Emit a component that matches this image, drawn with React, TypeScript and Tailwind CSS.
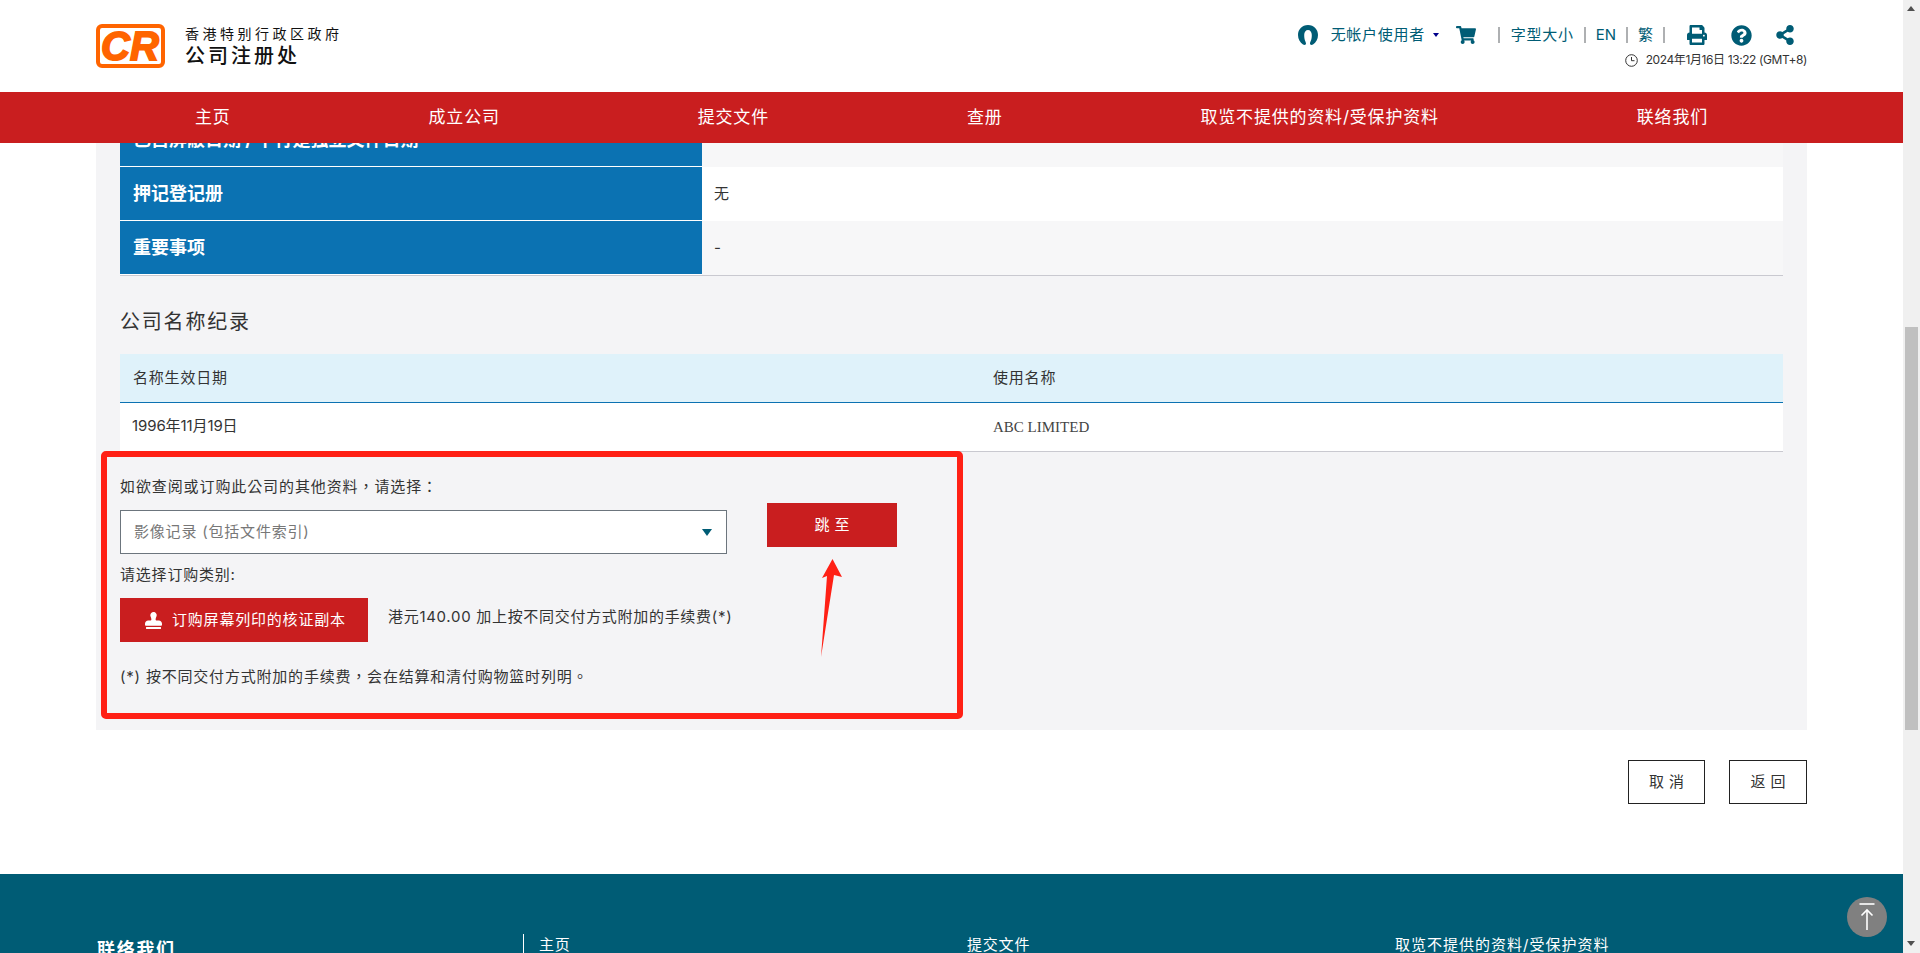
import React from "react";
import { FaShoppingCart, FaPrint, FaQuestionCircle, FaShareAlt, FaStamp } from "react-icons/fa";

const navItems = ["主页", "成立公司", "提交文件", "查册", "取览不提供的资料/受保护资料", "联络我们"];

function Logo() {
  return (
    <svg width="69" height="44" viewBox="0 0 69 44" className="shrink-0">
      <rect x="2" y="2" width="65" height="40" rx="4" fill="#fff" stroke="#ff6400" strokeWidth="4" />
      <text
        x="34"
        y="36"
        textAnchor="middle"
        fontFamily="'Liberation Sans', sans-serif"
        fontWeight="700"
        fontStyle="italic"
        fontSize="40"
        fill="#ff6400"
        stroke="#ff6400"
        strokeWidth="1.8"
      >
        CR
      </text>
    </svg>
  );
}

function UserIcon() {
  return (
    <svg width="20" height="20" viewBox="0 0 20 20" className="shrink-0">
      <path
        fill="#005c75"
        d="M10 0C4 0 0 4.500 0 10C0 14 2 17.500 5 19.500C6.500 20.300 8 20 8 18.500C8 17 6.200 15.500 6.200 10C6.200 7 7.800 5 10 5C12.200 5 13.800 7 13.800 10C13.800 15.500 12 17 12 18.500C12 20 13.500 20.300 15 19.500C18 17.500 20 14 20 10C20 4.500 16 0 10 0Z"
      />
    </svg>
  );
}

function Sep({ className }: { className: string }) {
  return <span className={`block w-[2px] h-[16px] bg-[#aeb0b2] shrink-0 ${className}`} />;
}

function Header() {
  return (
    <header className="h-[92px] px-[96px] flex justify-between bg-white shrink-0">
      <div className="flex items-start pt-[24px] gap-[20px]">
        <Logo />
        <div className="flex flex-col text-[#111]">
          <span className="text-[14px] leading-[17px] tracking-[3.5px] mt-[1px] whitespace-nowrap">香港特别行政区政府</span>
          <span className="text-[20px] leading-[24px] tracking-[3px] font-medium mt-[2px] whitespace-nowrap">公司注册处</span>
        </div>
      </div>
      <div className="flex flex-col items-end pt-[25px]">
        <div className="flex items-center h-[20px] mr-[12px] text-[#005c75] text-[15px] whitespace-nowrap">
          <UserIcon />
          <span className="ml-[13px] tracking-[0.7px]">无帐户使用者</span>
          <span className="ml-[8px] w-0 h-0 border-x-[3px] border-x-transparent border-t-[4px] border-t-[#00008b]" />
          <FaShoppingCart className="ml-[17px] text-[20px] text-[#005c75]" />
          <Sep className="ml-[22px]" />
          <span className="ml-[11px] tracking-[0.7px]">字型大小</span>
          <Sep className="ml-[10px]" />
          <span className="ml-[10px]">EN</span>
          <Sep className="ml-[10px]" />
          <span className="ml-[10px]">繁</span>
          <Sep className="ml-[10px]" />
          <FaPrint className="ml-[22px] text-[20px]" />
          <FaQuestionCircle className="ml-[24px] text-[21px]" />
          <FaShareAlt className="ml-[23px] text-[20px]" />
        </div>
        <div className="flex items-center mt-[5px] h-[20px] text-[12px] tracking-[-0.4px] text-[#333] whitespace-nowrap">
          <svg width="13" height="13" viewBox="0 0 13 13" className="mr-[8px]" fill="none" stroke="#333" strokeWidth="1">
            <circle cx="6.500" cy="6.500" r="5.800" />
            <path d="M6.500 3v3.700h3" />
          </svg>
          <span>2024年1月16日 13:22 (GMT+8)</span>
        </div>
      </div>
    </header>
  );
}

function Nav() {
  return (
    <nav className="h-[51px] bg-[#c91e1f] px-[96px] flex justify-around items-center text-white text-[17px] tracking-[0.8px] shrink-0 relative z-10">
      {navItems.map((n) => (
        <span key={n} className="whitespace-nowrap">{n}</span>
      ))}
    </nav>
  );
}

function InfoRow({ label, value, alt, first }: { label: string; value?: string; alt?: boolean; first?: boolean }) {
  return (
    <div className={`flex h-[54px] ${first ? "mt-[-30px]" : ""}`}>
      <div className="w-[582px] bg-[#0b72b2] border-b border-white flex items-center pl-[13px] text-white text-[18px] font-bold whitespace-nowrap">
        {label}
      </div>
      <div className={`flex-1 flex items-center pl-[12px] text-[15px] text-[#333] ${alt ? "bg-[#f7f7f8]" : "bg-white"}`}>
        {value}
      </div>
    </div>
  );
}

function Panel() {
  return (
    <section className="mx-[96px] h-[587px] bg-[#f4f4f6] shrink-0">
      <div className="mx-[24px]">
        <InfoRow first alt label="已自屏蔽日期 / 下行是独立文件日期" />
        <InfoRow label="押记登记册" value="无" />
        <div className="border-b border-[#c9c9d0]">
          <InfoRow alt label="重要事项" value="-" />
        </div>
        <h2 className="mt-[31px] h-[30px] flex items-center text-[20px] tracking-[1.800px] text-[#333]">公司名称纪录</h2>
        <div className="mt-[17px] flex h-[49px] bg-[#dff2fa] border-b border-[#0b72b2] items-center text-[15px] tracking-[0.8px] text-[#333]">
          <span className="w-[873px] pl-[13px]">名称生效日期</span>
          <span>使用名称</span>
        </div>
        <div className="flex h-[49px] bg-white border-b border-[#c9c9d0] items-center text-[15px] text-[#333]">
          <span className="w-[873px] pl-[12px] pb-[2px] tracking-[-0.1px]">1996年11月19日</span>
          <span className="font-['Liberation_Serif',serif] text-[15px] text-[#444]">ABC LIMITED</span>
        </div>
      </div>
      <div className="relative ml-[5px] mt-[-1px] w-[862px] h-[268px] border-[6px] border-[#ff2015] rounded-[5px] pl-[13px] pt-[18px] flex text-[15px] tracking-[0.8px] text-[#333]">
        <div className="w-[607px] shrink-0">
          <div className="h-[24px] flex items-center whitespace-nowrap tracking-[0.9px] font-['Inter','Noto_Sans_CJK_TC',sans-serif]">如欲查阅或订购此公司的其他资料，请选择：</div>
          <div className="mt-[11px] h-[44px] bg-white border border-[#6c757d] flex items-center justify-between pl-[13px] pr-[14px] text-[#777]">
            <span>影像记录 (包括文件索引)</span>
            <span className="w-0 h-0 border-x-[5px] border-x-transparent border-t-[7px] border-t-[#005c75]" />
          </div>
          <div className="mt-[9px] h-[24px] flex items-center">请选择订购类别:</div>
          <div className="mt-[11px] flex items-start whitespace-nowrap">
            <button className="w-[248px] h-[44px] bg-[#c91e1f] text-white flex items-center pl-[25px] gap-[10px] shrink-0">
              <FaStamp className="text-[17px] shrink-0" />
              <span>订购屏幕列印的核证副本</span>
            </button>
            <span className="ml-[20px] mt-[7px] h-[24px] flex items-center tracking-[0.7px]">港元140.00 加上按不同交付方式附加的手续费(*)</span>
          </div>
          <div className="mt-[23px] h-[24px] flex items-center whitespace-nowrap font-['Inter','Noto_Sans_CJK_TC',sans-serif]">(*) 按不同交付方式附加的手续费，会在结算和清付购物篮时列明。</div>
        </div>
        <button className="ml-[40px] mt-[28px] w-[130px] h-[44px] pl-[5px] bg-[#c91e1f] text-white tracking-[5px] shrink-0">跳至</button>
        <svg className="absolute left-[710px] top-[100px]" width="30" height="102" viewBox="0 0 30 102">
          <path fill="#ff2015" d="M15.500 2 L25 20 L17 18 L4 100 L10 19 L5 21 Z" />
        </svg>
      </div>
    </section>
  );
}

function Actions() {
  return (
    <div className="mt-[30px] mx-[96px] flex justify-end gap-[24px] shrink-0">
      <button className="w-[77px] h-[44px] pl-[5px] border border-[#222] bg-white text-[15px] tracking-[5px] text-[#333]">取消</button>
      <button className="w-[78px] h-[44px] pl-[5px] border border-[#222] bg-white text-[15px] tracking-[5px] text-[#333]">返回</button>
    </div>
  );
}

function Footer() {
  return (
    <footer className="mt-[70px] flex-1 bg-[#005c75] relative text-white pt-[60px] pl-[97px] flex">
      <div className="w-[426px] text-[18px] tracking-[1.700px] font-bold h-[24px] flex items-center mt-[3px]">联络我们</div>
      <div className="w-[444px] border-l border-white pl-[15px] h-[40px] text-[15px] tracking-[0.8px]">主页</div>
      <div className="w-[428px] text-[15px] tracking-[0.8px]">提交文件</div>
      <div className="text-[15px] tracking-[1px]">取览不提供的资料/受保护资料</div>
      <button className="absolute left-[1847px] top-[23px] w-[40px] h-[40px] rounded-full bg-[#808080] flex items-center justify-center">
        <svg width="20" height="28" viewBox="0 0 20 28" fill="none" stroke="#fff" strokeWidth="1.600">
          <path d="M2.500 1h15" />
          <path d="M10 27V7" />
          <path d="M4.500 12.500l5.500-5.500 5.500 5.500" />
        </svg>
      </button>
    </footer>
  );
}

function Scrollbar() {
  return (
    <div className="w-[17px] h-full bg-[#f0f0f0] relative shrink-0">
      <span className="absolute left-[4px] top-[6px] w-0 h-0 border-x-[4px] border-x-transparent border-b-[5px] border-b-[#505050]" />
      <div className="absolute left-[2px] top-[327px] w-[13px] h-[403px] bg-[#c0c0c0]" />
      <span className="absolute left-[4px] bottom-[7px] w-0 h-0 border-x-[4px] border-x-transparent border-t-[5px] border-t-[#505050]" />
    </div>
  );
}

export default function App() {
  return (
    <div className="w-[1920px] h-[953px] flex overflow-hidden bg-white font-['Inter','Noto_Sans_CJK_SC',sans-serif]">
      <div className="w-[1903px] h-full flex flex-col overflow-hidden">
        <Header />
        <Nav />
        <Panel />
        <Actions />
        <Footer />
      </div>
      <Scrollbar />
    </div>
  );
}
